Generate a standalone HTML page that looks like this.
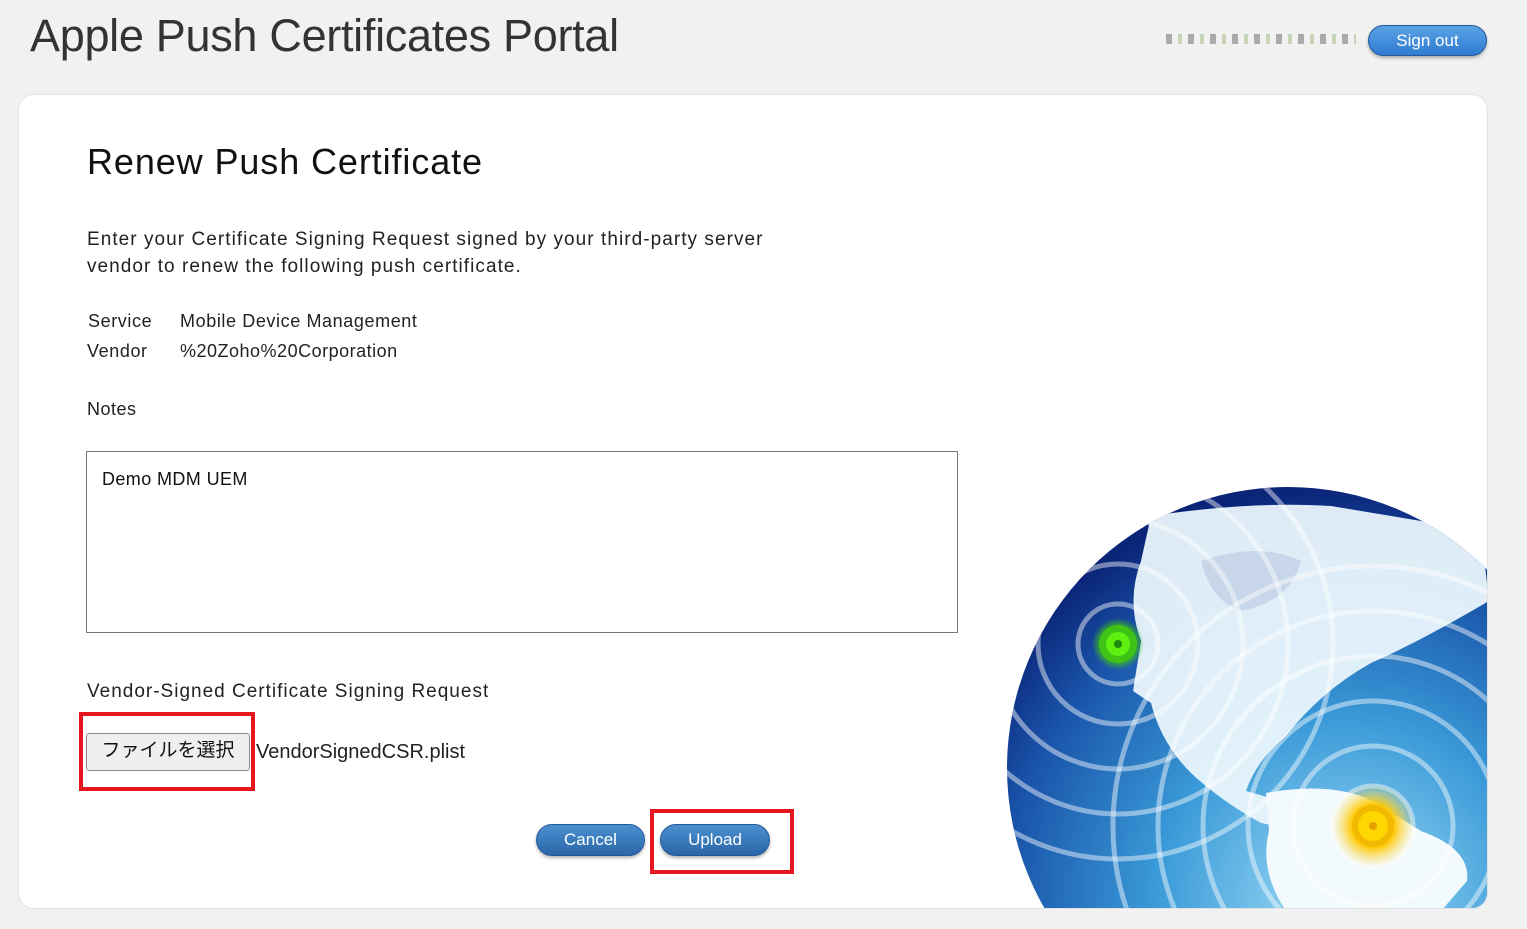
<!DOCTYPE html>
<html><head><meta charset="utf-8"><style>
*{margin:0;padding:0;box-sizing:border-box}
body{width:1527px;height:929px;background:#f1f1f1;font-family:"Liberation Sans","Noto Sans CJK JP",sans-serif;color:#111;position:relative;overflow:hidden}
.abs{position:absolute;white-space:nowrap}
.hdr{left:30px;top:10px;font-size:45px;color:#333;letter-spacing:-0.3px}
.card{position:absolute;left:18px;top:94px;width:1470px;height:815px;background:#fff;border:1px solid #e2e2e2;border-radius:16px;overflow:hidden}
.btn{position:absolute;height:32px;border-radius:16px;background:linear-gradient(#4b90d0,#2a66a8);border:1px solid #23599a;color:#fff;font-size:17px;text-align:center;line-height:30px;box-shadow:0 2px 3px rgba(0,0,0,.3)}
.t{font-size:19px;color:#222}
.red{position:absolute;border:4px solid #e5161f}
</style></head><body>
<div class="abs hdr">Apple Push Certificates Portal</div>
<div class="abs" style="left:1166px;top:34px;width:190px;height:10px;background:repeating-linear-gradient(90deg,#999 0 6px,transparent 6px 12px,#bca 12px 16px,transparent 16px 22px);opacity:.8"></div>
<div class="btn" style="left:1368px;top:25px;width:119px;height:31px;background:linear-gradient(#5aa2e6,#2f7bd0);">Sign out</div>
<div class="card">
<svg style="position:absolute;left:988px;top:392px" width="500" height="422" viewBox="0 0 500 422">
<defs>
<radialGradient id="g" cx="0.6" cy="0.75" r="0.75"><stop offset="0" stop-color="#a6e0f8"/><stop offset="0.45" stop-color="#3a9ad8"/><stop offset="0.8" stop-color="#1a55aa"/><stop offset="1" stop-color="#0a2478"/></radialGradient>
<radialGradient id="y"><stop offset="0" stop-color="#ffd800"/><stop offset=".5" stop-color="#ffc800"/><stop offset="1" stop-color="#ffe070" stop-opacity="0"/></radialGradient>
<radialGradient id="gr"><stop offset="0" stop-color="#5df010"/><stop offset=".6" stop-color="#3ec316"/><stop offset="1" stop-color="#3ec316" stop-opacity="0"/></radialGradient>
<clipPath id="c"><circle cx="1287" cy="767" r="281"/></clipPath>
</defs>
<g transform="translate(-1006,-486)">
<circle cx="1287" cy="767" r="281" fill="url(#g)"/>
<g clip-path="url(#c)">
<path d="M1150,515 Q1250,500 1330,505 L1480,530 L1488,600 Q1420,640 1370,662 Q1320,690 1285,735 Q1255,760 1245,790 L1280,800 L1300,830 L1260,822 Q1220,800 1190,772 Q1160,742 1150,702 L1132,690 L1140,640 Q1125,600 1140,560 Z" fill="#eaf6fc" opacity=".95"/>
<path d="M1200,560 Q1260,540 1300,560 Q1290,600 1240,610 Q1210,600 1200,560Z" fill="#b8c8e0" opacity=".6"/>
<path d="M1265,792 Q1330,780 1372,800 L1420,830 Q1470,848 1466,880 L1440,910 L1285,910 Q1258,870 1268,830 Z" fill="#f2fafe"/>
<g fill="none" stroke="#fff" stroke-opacity=".45" stroke-width="5">
<circle cx="1117" cy="643" r="40"/><circle cx="1117" cy="643" r="80"/><circle cx="1117" cy="643" r="125"/><circle cx="1117" cy="643" r="170"/><circle cx="1117" cy="643" r="215"/>
<circle cx="1372" cy="825" r="40"/><circle cx="1372" cy="825" r="80"/><circle cx="1372" cy="825" r="125"/><circle cx="1372" cy="825" r="170"/><circle cx="1372" cy="825" r="215"/><circle cx="1372" cy="825" r="260"/>
</g>
</g>
<circle cx="1117" cy="643" r="26" fill="url(#gr)"/><circle cx="1117" cy="643" r="19" fill="#3ec316"/><circle cx="1117" cy="643" r="12" fill="#5df010"/><circle cx="1117" cy="643" r="4" fill="#1f8a10"/>
<circle cx="1372" cy="825" r="42" fill="url(#y)"/><circle cx="1372" cy="825" r="21" fill="#f3b800"/><circle cx="1372" cy="825" r="15" fill="#ffd700"/><circle cx="1372" cy="825" r="4" fill="#e6a000"/>
</g>
</svg>
<div class="abs" style="left:68px;top:46px;font-size:36px;color:#111;letter-spacing:0.9px">Renew Push Certificate</div>
<div class="abs t" style="left:68px;top:131px;line-height:27px;letter-spacing:1.05px">Enter your Certificate Signing Request signed by your third-party server<br>vendor to renew the following push certificate.</div>
<div class="abs t" style="left:69px;top:216px;font-size:18px;letter-spacing:0.6px">Service</div>
<div class="abs t" style="left:161px;top:216px;font-size:18px;letter-spacing:0.6px">Mobile Device Management</div>
<div class="abs t" style="left:68px;top:246px;font-size:18px;letter-spacing:0.6px">Vendor</div>
<div class="abs t" style="left:161px;top:246px;font-size:18px;letter-spacing:0.5px">%20Zoho%20Corporation</div>
<div class="abs t" style="left:68px;top:304px;font-size:18px;letter-spacing:0.5px">Notes</div>
<div style="position:absolute;left:67px;top:356px;width:872px;height:182px;border:1px solid #777"><div class="abs" style="left:15px;top:17px;font-size:18px;letter-spacing:0.4px">Demo MDM UEM</div></div>
<div class="abs t" style="left:68px;top:586px;letter-spacing:1px">Vendor-Signed Certificate Signing Request</div>
<div style="position:absolute;left:67px;top:638px;width:164px;height:38px;background:#efefef;border:1px solid #888;border-radius:3px;font-size:19px;text-align:center;line-height:34px">ファイルを選択</div>
<div class="abs" style="left:237px;top:646px;font-size:20px;color:#222">VendorSignedCSR.plist</div>
<div class="btn" style="left:517px;top:729px;width:109px">Cancel</div>
<div class="btn" style="left:641px;top:729px;width:110px">Upload</div>
</div>
<div class="red" style="left:79px;top:712px;width:176px;height:79px"></div>
<div class="red" style="left:650px;top:809px;width:144px;height:65px"></div>
</body></html>
